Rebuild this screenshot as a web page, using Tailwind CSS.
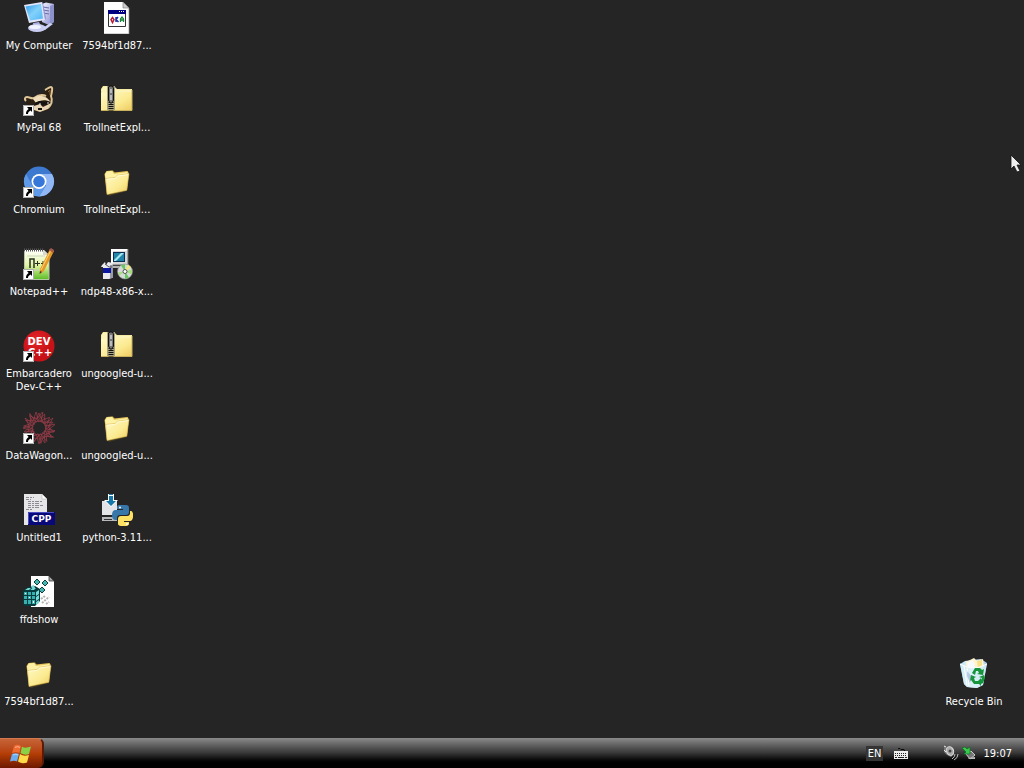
<!DOCTYPE html>
<html lang="en">
<head>
<meta charset="utf-8">
<title>Desktop</title>
<script src="https://cdn.jsdelivr.net/npm/@tailwindcss/browser@4"></script>
</head>
<body class="flex h-screen flex-col overflow-hidden bg-[#252525] font-['DejaVu_Sans_Condensed','DejaVu_Sans',sans-serif] text-[11px] leading-[13px] text-white">
<svg class="absolute size-0" aria-hidden="true">
  <defs>
    <linearGradient id="fold" x1="0" y1="0" x2="1" y2="1"><stop offset="0" stop-color="#fffac8"/><stop offset=".6" stop-color="#fbea90"/><stop offset="1" stop-color="#eecb62"/></linearGradient>
    <linearGradient id="screen" x1="0" y1="0" x2="1" y2="1"><stop offset="0" stop-color="#2f9af0"/><stop offset=".5" stop-color="#83d2fa"/><stop offset="1" stop-color="#50b4f5"/></linearGradient>
    <linearGradient id="case" x1="0" y1="0" x2="1" y2="1"><stop offset="0" stop-color="#f3f3ff"/><stop offset="1" stop-color="#8488cc"/></linearGradient>
    <linearGradient id="green" x1="0" y1="0" x2="0" y2="1"><stop offset="0" stop-color="#fff"/><stop offset=".5" stop-color="#e5f5a4"/><stop offset="1" stop-color="#55bb20"/></linearGradient>
    <radialGradient id="red" cx=".4" cy=".3"><stop offset="0" stop-color="#e52328"/><stop offset="1" stop-color="#c71318"/></radialGradient>
    <linearGradient id="bin" x1="0" y1="0" x2="1" y2="0"><stop offset="0" stop-color="#b7dcec"/><stop offset=".4" stop-color="#f2faff"/><stop offset="1" stop-color="#a5cde0"/></linearGradient>
    <symbol id="arrow" viewBox="0 0 11 11"><path d="M0 0h11v11H0z" fill="#fff"/><path d="M.5.5h10v10H.5z" fill="none" stroke="#777" stroke-width=".6"/><path d="M4 2h5v5L7.600 5.600C6 6.500 5 7.400 5 9H3c0-2.400.8-3.800 2.600-5z" fill="#000"/></symbol>
    <symbol id="folder" viewBox="0 0 32 32"><path d="M4 8l2-3 6-1 2 2 13-1 1 3-2 17-18 5-2-2z" fill="#5d4b1a" opacity=".5"/><path d="M3.500 8l2-3 6-.6 2 2.200 13-1.500 1.200 2L26 24 6 28z" fill="#e6c65d"/><path d="M4 8.500l2-3 5-.5 2 3 13.500-2v4L5 13z" fill="#fff2a4"/><path d="M4.500 12.500l9.500-1 2.500-2.300 11.500-1.500-2.300 16.600L6 28.500z" fill="url(#fold)" stroke="#d8b54e" stroke-width=".6"/><path d="M5.500 13.300l9-1 2-2.300 10.800-1.400" fill="none" stroke="#fffbd5"/></symbol>
    <symbol id="zip" viewBox="0 0 32 32"><path d="M0 5l2-3h11l3 3h15v22H0z" fill="#f0e294"/><path d="M.5 5L2.500 2.500h10l3 3H31V9H.5z" fill="#fbf3b8"/><path d="M13 8h18v18H0V9z" fill="url(#fold)"/><path d="M31 6v20.500H0" fill="none" stroke="#c9b05c"/><path d="M6 2h8v24H6z" fill="#a8a283"/><path d="M10 2v24.500" stroke="#111" stroke-width="5" stroke-dasharray="1 1"/><path d="M7.500 3l1.500-1h2l1.500 2v12l-1.500 3H9l-1.500-3z" fill="#777" stroke="#111"/><path d="M9.500 5h1v4h-1zM9.500 11h1v5h-1z" fill="#fff"/></symbol>
  </defs>
</svg>

<main class="flex min-h-0 flex-1 justify-between">
  <div class="grid auto-cols-[78px] grid-flow-col grid-rows-[repeat(9,82px)]">
    <button class="flex flex-col items-center gap-[5px] pt-0.5">
      <svg class="size-8" viewBox="0 0 32 32"><path d="M19 2l4-1.500 8 1.500v18l-5 3-7-3z" fill="url(#case)"/><path d="M27 4l4-2v18l-4 2.500z" fill="#8c91cb"/><path d="M20 5l6 1M20 8l6 1M20 11l6 1" stroke="#686ca8"/><path d="M1 3l18-3 3 18-16 3z" fill="#e2e5fb"/><path d="M22 18l1-2-3-15-1-1z" fill="#9195ce"/><path d="M2.500 4.500L18 2l2 14.500L7 18.500z" fill="url(#screen)"/><path d="M10 21l6-1 2 4-7 2z" fill="#aaaede"/><ellipse cx="14" cy="26" rx="9" ry="4" fill="#c9ccf1"/><ellipse cx="12" cy="25" rx="6" ry="2" fill="#f1f2ff"/><path d="M20 26l7-5 3 1-8 6z" fill="#cdd0f5"/></svg>
      <span>My Computer</span>
    </button>
    <button class="flex flex-col items-center gap-[5px] pt-0.5">
      <svg class="size-8" viewBox="0 0 32 32"><g transform="translate(-1 0)"><path d="M4 0h19l6 6v26H4z" fill="#fff"/><path d="M23 0v6h6z" fill="#ccc" stroke="#777" stroke-width=".6"/><path d="M29 6v26H4" fill="none" stroke="#888" stroke-width=".7"/><path d="M8.500 8.500h17v16h-17z" fill="#fff" stroke="#333"/><path d="M8 8h18v4H8z" fill="#000080"/><path d="M19 9h1v1h-1zM21 9h1v1h-1zM23 9h1v1h-1z" fill="#fff"/><path d="M12.500 15.500l1.500 2-1.500 3-1.500-3z" fill="none" stroke="#b51e30" stroke-width="1.500"/><path d="M16 15v5M18 15l-2 2.500 2.500 2.500" stroke="#2033a8" stroke-width="1.500" fill="none"/><path d="M20.500 20v-3l1.500-2 1.500 2v3M20.500 18h3" stroke="#158635" stroke-width="1.300" fill="none"/></g></svg>
      <span>7594bf1d87...</span>
    </button>
    <!-- The remaining entries are placed by row and column classes -->
    <button class="col-start-1 row-start-2 flex flex-col items-center gap-[5px] pt-0.5">
      <svg class="size-8" viewBox="0 0 32 32"><path d="M20 9l4-4 5-3 2 3-1 9-1 8-5 5-11 1-8-5-3-9 3-2 5 1z" fill="#2c2013"/><path d="M22 6c2-1 4-3 6-3s1 5 0 9c2 5 0 9-3 12M3 17c-2-2-1-4 1-4 3 0 4 2 7 1 4-3 8-4 12-2" fill="none" stroke="#dfc698" stroke-width="2"/><path d="M10 15c4-4 9-4 14-1l4 4c-6-3-11-2-15 1z" fill="#efdcb8"/><path d="M12 19c4-3 9-2 11 0l-4 3-7-1z" fill="#171310"/><path d="M23 17l5 2-4 3-3-2z" fill="#171310"/><path d="M11 22l6-2 3 3 8-4-3 6-8 3-6-2z" fill="#e6d4b2"/><path d="M15 24h4v2h-4z" fill="#15110e"/><path d="M16 20h2M24 19h2" stroke="#ddd"/><path d="M25 8l2-2v5" stroke="#8b6234" fill="none"/><use href="#arrow" x="0" y="21" width="11" height="11"/></svg>
      <span>MyPal 68</span>
    </button>
    <button class="col-start-1 row-start-3 flex flex-col items-center gap-[5px] pt-0.5">
      <svg class="size-8" viewBox="0 0 32 32"><circle cx="16" cy="15.500" r="15" fill="#3c79cf"/><path d="M16 8h13a15 15 0 0 1-13 22.500l7-11z" fill="#91b8f5"/><path d="M3 8a15 15 0 0 0 13 22.500l6-10-7 2-6-4z" fill="#5f9ae9"/><circle cx="16" cy="15.500" r="7.500" fill="#fff"/><circle cx="16" cy="15.500" r="5.800" fill="#3678da"/><use href="#arrow" x="0" y="21" width="11" height="11"/></svg>
      <span>Chromium</span>
    </button>
    <button class="col-start-1 row-start-4 flex flex-col items-center gap-[5px] pt-0.5">
      <svg class="size-8" viewBox="0 0 32 32"><path d="M1 2h20l5 5v25H1z" fill="url(#green)"/><path d="M20 2v5h6z" fill="#d6dacb"/><path d="M1 2h20" stroke="#555" stroke-width="3" stroke-dasharray="1 1"/><path d="M1.500 4v28M1 31.500h25V8" fill="none" stroke="#b6c5a5"/><path d="M4 8h18M4 22h18" stroke="#ccd4be"/><path d="M7 20v-9h4v9" fill="none" stroke="#263125" stroke-width="1.500"/><path d="M12 15.500h5M14.500 13v5M18 15.500h4M20 13v5" stroke="#263125"/><path d="M27 1l4 2-10 20-4 3 0-5z" fill="#e59a28"/><path d="M28 2L18 22" stroke="#ffd171"/><path d="M26 2l2-2 3 2-1 3z" fill="#a9594b"/><path d="M17 23l2 1-2.500 2z" fill="#432"/><use href="#arrow" x="0" y="21" width="11" height="11"/></svg>
      <span>Notepad++</span>
    </button>
    <button class="col-start-1 row-start-5 flex flex-col items-center gap-[5px] pt-0.5">
      <svg class="size-8" viewBox="0 0 32 32"><circle cx="16" cy="16" r="15.500" fill="url(#red)"/><text fill="#fff" font-family="DejaVu Sans, sans-serif" font-weight="bold" font-size="10" text-anchor="middle"><tspan x="16" y="15">DEV</tspan><tspan x="17" y="26">C++</tspan></text><use href="#arrow" x="0" y="21" width="11" height="11"/></svg>
      <span>Embarcadero<br>Dev-C++</span>
    </button>
    <button class="col-start-1 row-start-6 flex flex-col items-center gap-[5px] pt-0.5">
      <svg class="size-8" viewBox="0 0 32 32"><g fill="none" stroke="#9c3c49" stroke-width=".7" stroke-linejoin="bevel"><path id="star" d="M16 1l5 11 9-6-5 9 6 5-10-1 1 12-6-8-6 8 1-12-10 1 6-5-5-9 9 6z"/><use href="#star" transform="rotate(22 16 16)"/><use href="#star" transform="rotate(45 16 16)"/><use href="#star" transform="rotate(68 16 16)"/><circle cx="16" cy="16" r="7"/><circle cx="16" cy="16" r="11" stroke-dasharray="3 2"/></g><use href="#arrow" x="0" y="21" width="11" height="11"/></svg>
      <span>DataWagon...</span>
    </button>
    <button class="col-start-1 row-start-7 flex flex-col items-center gap-[5px] pt-0.5">
      <svg class="size-8" viewBox="0 0 32 32"><path d="M1 0h18l5 5v26H1z" fill="#e6e6e8"/><path d="M19 0v5h5z" fill="#fff" stroke="#aaa" stroke-width=".5"/><path d="M3 3.500h8M3 5.500h5M5 7.500h14M5 9.500h11M5 11.500h15M5 13.500h12M3 15.500h7" stroke="#8a8c91" stroke-dasharray="3 1 2 1 4 1"/><path d="M5 18h27v13H5z" fill="#080879"/><path d="M5.500 30V18.500H31" fill="none" stroke="#464ac0"/><text x="18.500" y="28" fill="#fff" font-family="DejaVu Sans, sans-serif" font-weight="bold" font-size="9" text-anchor="middle">CPP</text></svg>
      <span>Untitled1</span>
    </button>
    <button class="col-start-1 row-start-8 flex flex-col items-center gap-[5px] pt-0.5">
      <svg class="size-8" viewBox="0 0 32 32"><path d="M8 0h18l5 5v26H8z" fill="#fff"/><path d="M26 0v5h5z" fill="#aaa" stroke="#222" stroke-width=".7"/><path d="M19 27l7-6M18 23l4-3M23 28l3-2" stroke="#b2b2b2" stroke-width="2" stroke-dasharray="2 1"/><path d="M0 15l5-4 7-1 5 3v12l-5 5H2l-2-3z" fill="#073b3d"/><path d="M1 16h3v3H1zM5 16h3v3H5zM9 16h3v3H9zM1 20h3v3H1zM5 20h3v3H5zM9 20h3v3H9zM1 24h3v4H1zM5 24h3v4H5zM9 24h3v4H9z" fill="#36b1b2"/><path d="M2 14l3-2h3l-2 2zM7 14l3-2h3l-2 2zM13 16l3-2v4l-3 2zM13 21l3-2v4l-3 2zM13 26l3-2v3l-3 2z" fill="#75dbd7"/><path d="M14 3l3 3-3 3-3-3zM22 4l3 3-3 3-3-3zM19 11l3 3-3 3-3-3z" fill="#42b5b0" stroke="#123f3c" stroke-width="1"/><path d="M8 10l3-1 1 3-3 1z" fill="#74d6cf"/><path d="M2 17h1v1H2zM6 21h1v1H6zM10 25h1v2h-1z" fill="#fff"/></svg>
      <span>ffdshow</span>
    </button>
    <button class="col-start-1 row-start-9 flex flex-col items-center gap-[5px] pt-0.5">
      <svg class="size-8" viewBox="0 0 32 32"><use href="#folder"/></svg>
      <span>7594bf1d87...</span>
    </button>
    <button class="col-start-2 row-start-2 flex flex-col items-center gap-[5px] pt-0.5">
      <svg class="size-8" viewBox="0 0 32 32"><use href="#zip"/></svg>
      <span>TrollnetExpl...</span>
    </button>
    <button class="col-start-2 row-start-3 flex flex-col items-center gap-[5px] pt-0.5">
      <svg class="size-8" viewBox="0 0 32 32"><use href="#folder"/></svg>
      <span>TrollnetExpl...</span>
    </button>
    <button class="col-start-2 row-start-4 flex flex-col items-center gap-[5px] pt-0.5">
      <svg class="size-8" viewBox="0 0 32 32"><path d="M10 1h17v16H10z" fill="#d8d8d8"/><path d="M10 1h17l-2 2H12v12l-2 2z" fill="#fff"/><path d="M27 1v16H10" fill="none" stroke="#686868"/><path d="M12 4h12v10H12z" fill="#0b2d52"/><path d="M13 5h10v8H13z" fill="#2185aa"/><path d="M13 12l7-7h3l-8 8h-2z" fill="#a5e6ef"/><path d="M12 18h15v2H12z" fill="#b2b2b2"/><path d="M1 17l3-3 1 3 2-3 5 1-1 3v12l-3 1H2V19l-2 0z" fill="#e8e8ee"/><path d="M9 17h3v13H9z" fill="#9999ac"/><path d="M2 20h8v5H2z" fill="#0b159d"/><path d="M4 16l4 3h3" stroke="#555" fill="none"/><circle cx="24" cy="23.500" r="7.500" fill="#d5d9d7" stroke="#888" stroke-width=".6"/><path d="M24 23.500l-4-6 4-1.500zM24 23.500l4 6-4 1.500z" fill="#63c85e"/><path d="M24 23.500l-7 1 1 3zM24 23.500l7-2 0 5z" fill="#a4dc80"/><path d="M24 23.500l3-7 3 3z" fill="#f3e979"/><circle cx="24" cy="23.500" r="2" fill="#fff" stroke="#555"/></svg>
      <span>ndp48-x86-x...</span>
    </button>
    <button class="col-start-2 row-start-5 flex flex-col items-center gap-[5px] pt-0.5">
      <svg class="size-8" viewBox="0 0 32 32"><use href="#zip"/></svg>
      <span>ungoogled-u...</span>
    </button>
    <button class="col-start-2 row-start-6 flex flex-col items-center gap-[5px] pt-0.5">
      <svg class="size-8" viewBox="0 0 32 32"><use href="#folder"/></svg>
      <span>ungoogled-u...</span>
    </button>
    <button class="col-start-2 row-start-7 flex flex-col items-center gap-[5px] pt-0.5">
      <svg class="size-8" viewBox="0 0 32 32"><path d="M1 7h15v14H1z" fill="#e3e5e8"/><path d="M1 23h15v4H1z" fill="#b7b9bc"/><path d="M3 25.500h8" stroke="#333"/><path d="M7 0h6v6h4l-7 7-7-7h4z" fill="#fff"/><path d="M8 0h4v1H8zM8 2h4v5h3l-5 5-5-5h3z" fill="#1678a9"/><path d="M18 11h7c2 0 3 1 3 3v4c0 2-1 3-3 3h-6c-2 0-3 1-3 3v2h-2c-4 0-4-10 0-10h8v-1h-6v-2c0-1 1-2 2-2z" fill="#3777aa"/><path d="M29 17h1c3 0 3 10-1 10h-6v1h5v2c0 3-11 3-11 0v-5c0-2 1-3 3-3h6c2 0 3-1 3-3z" fill="#ffe164"/><circle cx="19" cy="13.500" r="1" fill="#fff"/><circle cx="26" cy="30" r="1" fill="#fff"/></svg>
      <span>python-3.11...</span>
    </button>
  </div>

  <div class="mr-[11px] grid w-[78px] grid-rows-[repeat(9,82px)]">
    <button class="row-start-9 flex flex-col items-center gap-[5px] pt-0.5">
      <svg class="size-8" viewBox="0 0 32 32"><path d="M2 6l5-3 16-2 6 4-4 22-6 3-10-1-3-3z" fill="url(#bin)"/><path d="M8 4l8-4 3 3 6-2 1 8-17 4z" fill="#fff4cf"/><path d="M9 5l6-3 3 10-7 1z" fill="#f7faff"/><path d="M19 3l5-1v8l-4 1z" fill="#f7df8b"/><path d="M2 6l7 3 10 1 10-4-4 21-6 3-10-1-3-3z" fill="#d6edf7" opacity=".8"/><path d="M2 6l7 3 10 1 10-4M9 10l2 18M6 8l3 19" fill="none" stroke="#fff"/><path d="M9 13l5 6-2 6-3-7z" fill="#9daad5" opacity=".6"/><g fill="#15943b"><path d="M14 15l3-5h5l2 2 2-1-1 6-6-1 2-1-1-2h-2l-1 4z"/><path d="M13 17l5 2-2 1 1 3h4v3h-5l-3-4-1 1z"/><path d="M21 19l5-2 1 3-2 5-2 1v2l-4-4 4-4v2l1-2z"/></g></svg>
      <span>Recycle Bin</span>
    </button>
  </div>
</main>

<footer class="flex h-[30px] shrink-0 items-stretch justify-between bg-linear-to-b from-[#8b8b8b] via-[#373737] via-50% to-black to-90%">
  <button aria-label="Start" class="flex w-11 items-center justify-center rounded-r-md border-t border-r-2 border-[#5b1b08] border-t-[#d47a50] bg-linear-to-b from-[#c66437] via-[#b43e06] via-50% to-[#6e1900]">
    <svg class="h-5 w-[22px]" viewBox="0 0 22 20"><path d="M4 2c3-2 5-1 7 0L9.500 9C7 8 5 8 2 9z" fill="#f16b31"/><path d="M12 2.500c3 2 5 1 9 0l-2 7.500c-3 1-5 1-8.500-1z" fill="#8bd146"/><path d="M2 10c3-1 5-1 7 0l-2 7.500c-2-1-4-1-7 0z" fill="#6aaef1"/><path d="M10 10c3 2 5 2 9 1l-2 7.500c-3 1-6 1-9-1z" fill="#ffdb49"/><path d="M5 3.500c2-1 3-1 5 0M3 11c2-1 3-1 5 0" stroke="#fff" opacity=".5" fill="none"/></svg>
  </button>
  <div class="flex items-center pr-3">
    <button class="bg-[#343434] px-0.5 py-px">EN</button>
    <button aria-label="Keyboard" class="ml-2.5"><svg class="h-4 w-4" viewBox="0 0 16 16"><path d="M5 3.500h2l1 1h3l1 2" stroke="#090909" fill="none"/><path d="M1 6h14v8H1z" fill="#eee"/><path d="M2 8.500h12M2 10.500h12" stroke="#222" stroke-dasharray="1 1"/><path d="M2 12.500h2M5 12.500h6M12 12.500h2" stroke="#222"/></svg></button>
    <button aria-label="Volume" class="ml-[34px]"><svg class="h-4 w-4" viewBox="0 0 16 16"><path d="M1 2l3 1 4-2 3 3v5l-3 3-4-2-3-3z" fill="#777"/><ellipse cx="7" cy="6" rx="3.500" ry="4.500" transform="rotate(-25 7 6)" fill="#aaa" stroke="#ddd"/><circle cx="7" cy="6" r="1.500" fill="#444"/><path d="M1 1l2 1M1 5l2 2" stroke="#eee"/><path d="M12 9q0 3-3 5M15 9q0 4-4 6" fill="none" stroke="#bbb"/></svg></button>
    <button aria-label="Safely Remove Hardware" class="ml-0.5"><svg class="h-4 w-4" viewBox="0 0 16 16"><path d="M5 9l5-3 4 4-5 4z" fill="#777" stroke="#ccc"/><path d="M7 13l7-1v2H8z" fill="#bbb"/><path d="M1 3l3-1 2 2 3-2v7H3l2-2z" fill="#35c94d" stroke="#116b20" stroke-width=".7"/></svg></button>
    <time class="ml-1.5">19:07</time>
  </div>
</footer>

<svg class="pointer-events-none absolute top-[154px] right-[2px] h-5 w-3" viewBox="0 0 12 20" aria-hidden="true"><path d="M1 1v14l3-3 3 6 3-1-3-6h4z" fill="#eee" stroke="#111" stroke-width=".8"/></svg>
</body>
</html>
